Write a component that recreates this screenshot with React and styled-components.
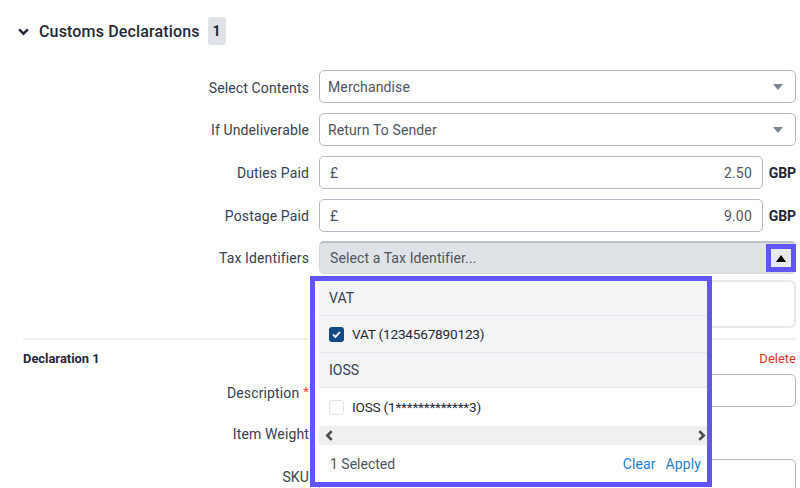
import React from "react";
import styled, { createGlobalStyle } from "styled-components";

const Global = createGlobalStyle`
  html, body { margin: 0; padding: 0; background: #fff; }
  body { width: 800px; height: 488px; overflow: hidden; font-family: Roboto, "Liberation Sans", sans-serif; }
  * { box-sizing: border-box; }
`;

const Page = styled.div`
  position: relative;
  width: 800px;
  height: 488px;
  overflow: hidden;
  padding: 0 4px 0 23px;
  color: #1f2937;
  font-size: 14px;
`;

const Heading = styled.div`
  display: flex;
  align-items: center;
  height: 70px;
  padding-bottom: 8px;
  margin-left: -5px;
`;

const Title = styled.h2`
  margin: 0 8px 0 10px;
  font-size: 16px;
  font-weight: 500;
  letter-spacing: 0.15px;
  color: #1f2937;
`;

const Count = styled.span`
  display: flex;
  align-items: center;
  justify-content: center;
  width: 18px;
  height: 28px;
  border-radius: 3px;
  background: #dfe3e8;
  font-size: 14px;
  font-weight: 700;
`;

const Form = styled.div`
  display: flex;
  flex-direction: column;
  gap: 10px;
`;

const Row = styled.div`
  display: grid;
  grid-template-columns: 286px 1fr;
  column-gap: 10px;
  align-items: center;
`;

const Label = styled.label`
  padding-top: ${(p) => p.$top ?? 1}px;
  text-align: right;
  color: #374151;
  letter-spacing: 0.13px;
  white-space: nowrap;
`;

const Required = styled.span`
  color: #ef4444;
  margin-left: 4px;
  vertical-align: 2px;
  font-size: 13px;
`;

const Field = styled.div`
  display: flex;
  align-items: center;
  height: 33px;
  padding: 1px 9px 0 8px;
  border: 1px solid #b3bac5;
  border-radius: 5px;
  background: #fff;
  color: #4b5563;
  letter-spacing: 0.13px;
  flex: 1;
`;

const Value = styled.span`
  flex: 1;
`;

const Arrow = styled.span`
  width: 0;
  height: 0;
  margin-right: 3px;
  border-left: 5px solid transparent;
  border-right: 5px solid transparent;
  border-top: 6px solid #7d8794;
`;

const Money = styled.div`
  display: flex;
  align-items: center;
`;

const Pound = styled.span`
  margin-left: 2px;
`;

const Amount = styled.span`
  flex: 1;
  text-align: right;
  padding-right: 1px;
  letter-spacing: 0.2px;
`;

const Currency = styled.span`
  width: 33px;
  text-align: right;
  font-size: 14px;
  font-weight: 700;
  color: #1f2937;
  letter-spacing: -0.1px;
`;

const TaxField = styled(Field)`
  margin-top: -1px;
  padding: 0 9px 0 10px;
  background: #dfe2e7;
  border-color: #d5d8de;
  border-top: 2px solid #bcc1c9;
  color: #4b5563;
  letter-spacing: 0.1px;
`;

const TagBox = styled.div`
  grid-column: 2;
  height: 48px;
  margin-top: -5px;
  border: 2px solid #e5e7eb;
  border-radius: 6px;
`;

const TaxRow = styled(Row)`
  row-gap: 11px;
`;

const Divider = styled.hr`
  margin: 10px 0 0;
  border: 0;
  border-top: 2px solid #f0f1f3;
`;

const SubHead = styled.div`
  display: flex;
  align-items: center;
  justify-content: space-between;
  height: 34px;
  padding-top: 2px;
`;

const SubTitle = styled.span`
  font-size: 12.9px;
  font-weight: 700;
  color: #1f2937;
`;

const Delete = styled.span`
  font-size: 13px;
  color: #e5352b;
`;

const EmptySlot = styled.div`
  height: 32px;
`;

const Highlight = styled.div`
  position: absolute;
  left: 766px;
  top: 244px;
  width: 30px;
  height: 28px;
  display: flex;
  align-items: center;
  justify-content: center;
  border: 5px solid #6155ff;
  background: #e7e9ec;
`;

const UpArrow = styled.span`
  width: 0;
  height: 0;
  border-left: 5px solid transparent;
  border-right: 5px solid transparent;
  border-bottom: 7px solid #000;
`;

const Outline = styled.div`
  position: absolute;
  left: 310px;
  top: 276px;
  width: 402px;
  height: 211px;
  border: 5px solid #6155ff;
  padding-left: 4px;
  background: #fff;
  display: flex;
  flex-direction: column;
  color: #1f2937;
`;

const Group = styled.div`
  display: flex;
  align-items: center;
  height: ${(p) => p.$h}px;
  padding-left: 10px;
  background: #f3f4f6;
  border-bottom: 1px solid #e5e7eb;
  color: #374151;
  font-size: 14px;
`;

const Option = styled.div`
  display: flex;
  align-items: center;
  gap: 8px;
  height: ${(p) => p.$h}px;
  padding-left: 10px;
  background: ${(p) => (p.$selected ? "#f3f4f6" : "#fff")};
  border-bottom: ${(p) => (p.$selected ? "1px solid #e5e7eb" : "0")};
  font-size: 13.6px;
  letter-spacing: -0.2px;
`;

const Check = styled.span`
  display: flex;
  align-items: center;
  justify-content: center;
  width: 15px;
  height: 15px;
  border-radius: 3px;
  background: ${(p) => (p.$on ? "#134a85" : "#fff")};
  border: ${(p) => (p.$on ? "0" : "1.5px solid #e0e3e9")};
`;

const Scroll = styled.div`
  display: flex;
  align-items: center;
  justify-content: space-between;
  height: 19px;
  padding: 0 0 0 5px;
  background: #f0f0f0;
  color: #4d4d4d;
`;

const Footer = styled.div`
  display: flex;
  align-items: center;
  justify-content: space-between;
  flex: 1;
  padding: 0 6px 0 11px;
  color: #4b5563;
`;

const Actions = styled.div`
  display: flex;
  gap: 10px;
  letter-spacing: 0.1px;
`;

const Link = styled.span`
  color: #1f7fcf;
`;

const Chevron = ({ d, size = 11, weight = 2.2 }) => (
  <svg width={size} height={size} viewBox="0 0 10 10" fill="none" stroke="currentColor" strokeWidth={weight}>
    <path d={d} />
  </svg>
);

export default function App() {
  return (
    <Page>
      <Global />
      <Heading>
        <Chevron d="M1 3l4 4 4-4" />
        <Title>Customs Declarations</Title>
        <Count>1</Count>
      </Heading>

      <Form>
        <Row>
          <Label $top={2}>Select Contents</Label>
          <Field>
            <Value>Merchandise</Value>
            <Arrow />
          </Field>
        </Row>
        <Row>
          <Label>If Undeliverable</Label>
          <Field>
            <Value>Return To Sender</Value>
            <Arrow />
          </Field>
        </Row>
        <Row>
          <Label>Duties Paid</Label>
          <Money>
            <Field>
              <Pound>£</Pound>
              <Amount>2.50</Amount>
            </Field>
            <Currency>GBP</Currency>
          </Money>
        </Row>
        <Row>
          <Label>Postage Paid</Label>
          <Money>
            <Field>
              <Pound>£</Pound>
              <Amount>9.00</Amount>
            </Field>
            <Currency>GBP</Currency>
          </Money>
        </Row>
        <TaxRow>
          <Label $top={0}>Tax Identifiers</Label>
          <TaxField>
            <Value>Select a Tax Identifier...</Value>
          </TaxField>
          <TagBox />
        </TaxRow>
      </Form>

      <Divider />
      <SubHead>
        <SubTitle>Declaration 1</SubTitle>
        <Delete>Delete</Delete>
      </SubHead>

      <Form>
        <Row>
          <Label $top={3}>
            Description<Required>*</Required>
          </Label>
          <Field />
        </Row>
        <Row>
          <Label $top={2}>Item Weight</Label>
          <EmptySlot />
        </Row>
        <Row>
          <Label $top={3}>SKU</Label>
          <Field />
        </Row>
      </Form>

      <Highlight>
        <UpArrow />
      </Highlight>

      <Outline>
        <Group $h={35}>VAT</Group>
        <Option $h={37} $selected>
          <Check $on>
            <svg width="11" height="11" viewBox="0 0 11 11" fill="none" stroke="#fff" strokeWidth="1.8">
              <path d="M2 5.5l2.4 2.4L9 3" />
            </svg>
          </Check>
          VAT (1234567890123)
        </Option>
        <Group $h={35}>IOSS</Group>
        <Option $h={38}>
          <Check />
          IOSS (1*************3)
        </Option>
        <Scroll>
          <Chevron d="M7 1L3 5l4 4" weight={2.4} />
          <Chevron d="M3 1l4 4-4 4" weight={2.4} />
        </Scroll>
        <Footer>
          <span>1 Selected</span>
          <Actions>
            <Link>Clear</Link>
            <Link>Apply</Link>
          </Actions>
        </Footer>
      </Outline>
    </Page>
  );
}
